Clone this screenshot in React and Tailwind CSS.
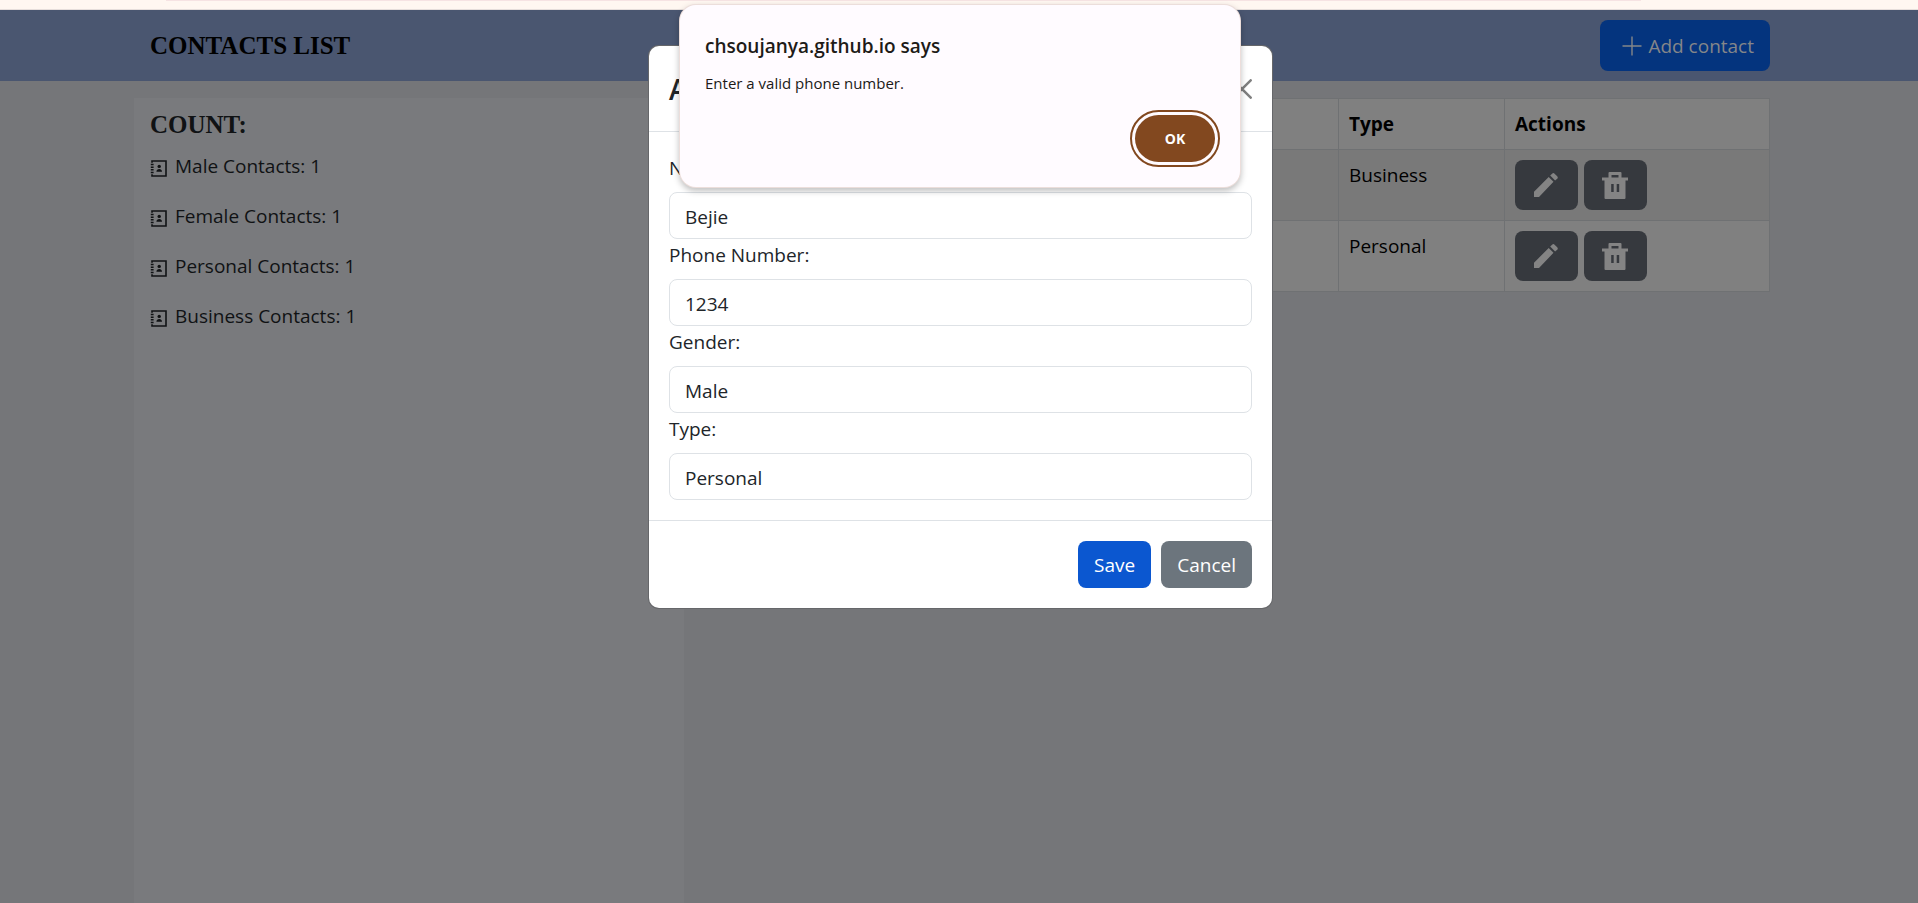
function PlusIcon() {
  return (
    <svg viewBox="0 0 20 20" className="size-5 shrink-0" fill="none" stroke="currentColor" strokeWidth="1.400" aria-hidden="true">
      <path d="M10 .5V19.500M.5 10H19.500" />
    </svg>
  );
}

function CloseIcon() {
  return (
    <svg viewBox="0 0 20 20" className="size-5" fill="none" stroke="currentColor" strokeWidth="2.500" strokeLinecap="round" aria-hidden="true">
      <path d="M1.300 1.300L18.700 18.700M18.700 1.300L1.300 18.700" />
    </svg>
  );
}

function BookIcon() {
  return (
    <svg viewBox="0 0 17 17" className="size-[17px] shrink-0 translate-y-0.5" fill="none" stroke="currentColor" aria-hidden="true">
      <path d="M2 2.800V1H16V16H2V14.200" strokeWidth="1.600" />
      <path d="M.8 4.500H3.600M.8 7.200H3.600M.8 9.800H3.600M.8 12.500H3.600" strokeWidth="1.400" />
      <circle cx="9.200" cy="6.400" r="1.700" fill="currentColor" stroke="none" />
      <path d="M6.400 11.800c0-3.800 5.600-3.800 5.600 0z" fill="currentColor" stroke="none" />
    </svg>
  );
}

function PencilIcon() {
  return (
    <svg viewBox="0 0 24 24" className="size-6" fill="currentColor" aria-hidden="true">
      <path d="M0 24V18.700L14.700 4L19.500 8.800L5 24zM16.200 2.600L18.100.7a1.800 1.800 0 0 1 2.500 0L23.200 3.300a1.800 1.800 0 0 1 0 2.500L21.100 7.600z" />
    </svg>
  );
}

function TrashIcon() {
  return (
    <svg viewBox="0 0 26 27" className="h-[27px] w-[26px]" fill="currentColor" fillRule="evenodd" aria-hidden="true">
      <path d="M6.500 5.500V1a1 1 0 0 1 1-1H18.500a1 1 0 0 1 1 1V5.500H26V8.500H23.500V26a1 1 0 0 1-1 1H3.500a1 1 0 0 1-1-1V8.500H0V5.500zM9.500 5.500H16.500V3H9.500zM9.200 12V20H11.700V12zM14.700 12V20H17.200V12z" />
    </svg>
  );
}

const counts = ["Male Contacts: 1", "Female Contacts: 1", "Personal Contacts: 1", "Business Contacts: 1"];

const types = ["Business", "Personal"];

const fields = [
  { id: "name", label: "Name:", value: "Bejie" },
  { id: "phone", label: "Phone Number:", value: "1234" },
];

const selects = [
  { id: "gender", label: "Gender:", options: ["Male", "Female"] },
  { id: "type", label: "Type:", options: ["Personal", "Business"] },
];

const cell = "border border-[#6f7173] px-[10px] py-[10px] text-left align-top";
const iconButton = "flex h-[50px] w-[63px] items-center justify-center rounded-lg bg-[#36393e] text-[#848484]";
const label = "block leading-8";
const control = "mt-2 block h-[47px] w-full appearance-none rounded-lg border border-[#dee2e6] bg-white px-[15px] pt-0.5 text-[#212529]";

export default function App() {
  return (
    <div className="relative flex min-h-screen flex-col bg-[#757679] font-['Open_Sans','Noto_Sans',sans-serif] text-[19px] leading-[30px] text-[#101214]">
      <div className="h-[10px] border-b border-[#e6dedb] bg-[#fff7f1]">
        <div className="ml-[166px] h-px w-10/13 bg-[#f6e3e3]" />
      </div>
      <header className="bg-[#4a5670]">
        <div className="mx-auto flex h-[71px] max-w-[1650px] items-center justify-between pr-[14px] pl-4">
          <h1 className="font-['Liberation_Serif',serif] text-[25px] font-bold text-black">CONTACTS LIST</h1>
          <button className="flex h-[51px] items-center gap-1.5 rounded-lg bg-[#04347e] pr-4 pl-[22px] text-[#848689]">
            <PlusIcon />
            <span>Add contact</span>
          </button>
        </div>
      </header>

      <main className="mx-auto mt-[17px] flex w-full max-w-[1650px] grow">
        <aside className="w-1/3 shrink-0 bg-[#797a7d] py-3 pr-[14px] pl-4">
          <h2 className="mb-[11px] font-['Liberation_Serif',serif] text-[25px] font-bold">COUNT:</h2>
          <ul className="flex flex-col gap-5">
            {counts.map((text) => (
              <li key={text} className="flex items-center gap-2">
                <BookIcon />
                {text}
              </li>
            ))}
          </ul>
        </aside>
        <section className="min-w-0 grow pr-[14px] pl-4">
          <table className="w-full table-fixed border-collapse bg-[#808080] text-black">
            <thead>
              <tr className="h-[51px] font-bold">
                <td className={cell} />
                <th className={cell + " w-[166px]"}>Type</th>
                <th className={cell + " w-[265px]"}>Actions</th>
              </tr>
            </thead>
            <tbody>
              {types.map((type) => (
                <tr key={type} className="odd:bg-[#797979]">
                  <td className={cell} />
                  <td className={cell}>{type}</td>
                  <td className={cell}>
                    <div className="flex gap-1.5">
                      <button aria-label="Edit" className={iconButton}><PencilIcon /></button>
                      <button aria-label="Delete" className={iconButton}><TrashIcon /></button>
                    </div>
                  </td>
                </tr>
              ))}
            </tbody>
          </table>
        </section>
      </main>

      <div className="absolute inset-x-0 top-[46px] flex justify-center pl-[3px]">
        <form className="w-[623px] rounded-[10px] bg-white text-[#212529] shadow-[0_0_0_1px_#66676a]">
          <div className="flex h-[86px] items-center justify-between border-b border-[#dee2e6] px-5">
            <h2 className="text-[28px] font-semibold">Add contact</h2>
            <button type="button" aria-label="Close" className="text-[#7f7f7f]"><CloseIcon /></button>
          </div>
          <div className="p-5">
            {fields.map((f) => (
              <div key={f.id}>
                <label htmlFor={f.id} className={label}>{f.label}</label>
                <input id={f.id} defaultValue={f.value} className={control} />
              </div>
            ))}
            {selects.map((f) => (
              <div key={f.id}>
                <label htmlFor={f.id} className={label}>{f.label}</label>
                <select id={f.id} className={control}>
                  {f.options.map((o) => <option key={o}>{o}</option>)}
                </select>
              </div>
            ))}
          </div>
          <div className="flex justify-end gap-[10px] border-t border-[#dee2e6] p-5 text-white">
            <button type="button" className="h-[47px] rounded-lg bg-[#0b57d0] px-4">Save</button>
            <button type="button" className="h-[47px] rounded-lg bg-[#6c757d] px-4">Cancel</button>
          </div>
        </form>
      </div>

      <div className="absolute inset-x-0 top-[5px] flex justify-center pl-[2px]">
        <div role="alertdialog" aria-labelledby="alert-title" className="w-[560px] rounded-2xl bg-[#fffbff] px-[25px] pt-[26px] pb-[25px] text-[#201a17] shadow-[0_0_0_1px_#ecdedb,0_3px_6px_1px_#00000040]">
          <h2 id="alert-title" className="font-semibold">chsoujanya.github.io says</h2>
          <p className="mt-[7px] text-[15px] leading-[30px]">Enter a valid phone number.</p>
          <div className="mt-[17px] flex justify-end">
            <button className="h-[47px] w-20 rounded-full bg-[#82481f] text-sm font-bold text-white outline-2 outline-offset-3 outline-[#82481f]">OK</button>
          </div>
        </div>
      </div>
    </div>
  );
}
